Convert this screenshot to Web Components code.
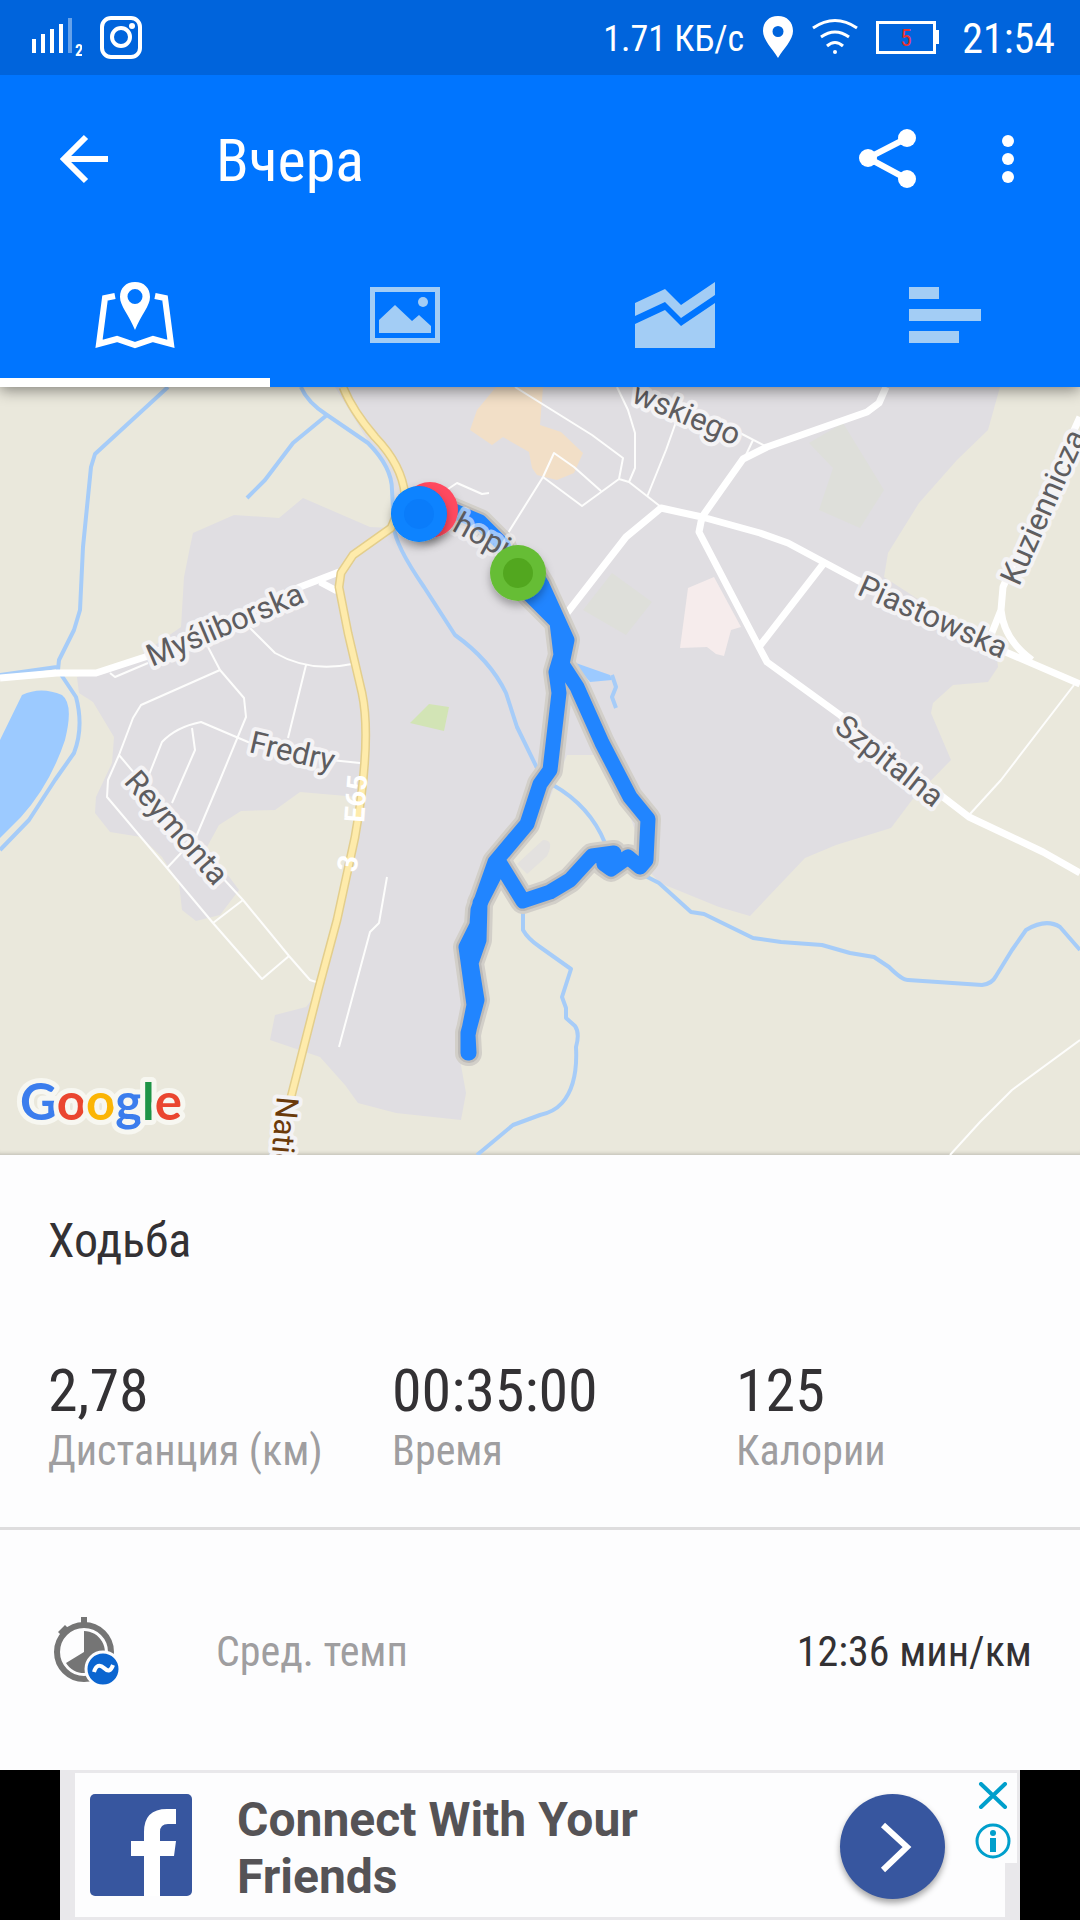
<!DOCTYPE html>
<html lang="ru">
<head>
<meta charset="utf-8">
<meta name="viewport" content="width=device-width, initial-scale=1">
<title>Вчера</title>
<style>
body{
    margin:0;
    min-height:100vh;
    display:flex;
    flex-direction:column;
    background-color:#FDFDFE;
    color:#333134;
    font-family:"Roboto Condensed", Roboto, sans-serif;
}
</style>
</head>
<body>
<app-header title="Вчера">
    <status-bar slot="status" speed="1.71 КБ/с" battery="5" time="21:54"></status-bar>
</app-header>
<route-map></route-map>
<activity-summary title="Ходьба">
    <metric-value number="2,78" label="Дистанция (км)"></metric-value>
    <metric-value number="00:35:00" label="Время"></metric-value>
    <metric-value number="125" label="Калории"></metric-value>
</activity-summary>
<detail-row label="Сред. темп" value="12:36 мин/км"></detail-row>
<ad-banner>Connect With Your Friends</ad-banner>

<script>
function makeTemplate(html){
    const template = document.createElement("template");
    template.innerHTML = html;
    return template;
}

class BaseElement extends HTMLElement{
    constructor(template){
        super();
        this.attachShadow({mode: "open"});
        this.shadowRoot.appendChild(template.content.cloneNode(true));
    }

    fill(...names){
        names.forEach(name => {
            this.shadowRoot.getElementById(name).textContent = this.getAttribute(name);
        });
    }
}

/* status bar */
const statusTemplate = makeTemplate(`
<style>
:host{
    display:flex;
    align-items:center;
    gap:18px;
    padding:10px 25px 11px 32px;
    background-color:#0064DC;
    color:#fff;
    line-height:50px;
}
svg{
    display:block;
    flex:none;
}
span{
    padding-top:4px;
}
#speed{
    margin-left:auto;
    font-size:36px;
}
#time{
    font-size:42px;
    margin-left:4px;
}
#battery{
    font-size:23px;
    fill:#E8322F;
}
</style>
<svg width="50" height="44" viewBox="32 15 50 44" fill="#fff">
    <path d="M32 39h4v14h-4zM41 34h4v19h-4zM50 29h4v24h-4zM59 24h4v29h-4z"/>
    <path d="M68 18h4v35h-4z" opacity=".4"/>
    <text x="75" y="56" font-size="16" font-weight="700">2</text>
</svg>
<svg width="42" height="44" viewBox="0 0 42 44" fill="none" stroke="#fff" stroke-width="4">
    <rect x="2" y="3" width="38" height="39" rx="9"/>
    <circle cx="21" cy="22" r="9"/>
    <circle cx="32" cy="11" r="3" fill="#fff" stroke="none"/>
</svg>
<span id="speed"></span>
<svg width="32" height="44" viewBox="0 0 32 44">
    <path fill="#fff" fill-rule="evenodd" d="M16 1C7 1 1 7 1 16c0 9 9 17 15 27 6-10 15-18 15-27C31 7 25 1 16 1zm0 10a5.500 5.500 0 1 1 0 11 5.500 5.500 0 0 1 0-11z"/>
</svg>
<svg width="46" height="44" viewBox="0 0 46 44" fill="none" stroke="#fff" stroke-width="3">
    <path d="M1 13Q23-2 45 13M9 22Q23 12 37 22M15 31Q23 24 31 31"/>
    <circle cx="23" cy="37" r="2" fill="#fff" stroke="none"/>
</svg>
<svg width="64" height="44" viewBox="0 0 64 44">
    <rect x="1.500" y="7.500" width="57" height="30" fill="none" stroke="#fff" stroke-width="3"/>
    <path d="M60 15h3v14h-3z" fill="#fff"/>
    <text id="battery" x="30" y="31" text-anchor="middle"></text>
</svg>
<span id="time"></span>
`);

class StatusBar extends BaseElement{
    constructor(){
        super(statusTemplate);
    }

    connectedCallback(){
        this.fill("speed", "battery", "time");
    }
}

/* toolbar and tabs */
const headerTemplate = makeTemplate(`
<style>
:host{
    display:block;
    position:relative;
    z-index:1;
    background-color:#0075FF;
    color:#fff;
    box-shadow:0 3px 14px rgba(0,0,0,.45);
}
#toolbar{
    display:flex;
    align-items:center;
    padding:46px 36px;
}
h1{
    margin:0 auto 0 84px;
    padding-top:4px;
    font-size:60px;
    line-height:72px;
    font-weight:400;
}
button{
    border:0;
    padding:0;
    background:none;
    color:inherit;
    cursor:pointer;
}
svg{
    display:block;
    margin:0 auto;
}
#back{
    width:96px;
}
#share{
    width:72px;
    margin-right:48px;
}
#more{
    width:72px;
}
nav{
    display:grid;
    grid-template-columns:repeat(4, 1fr);
}
nav button{
    padding:36px 0 27px;
    border-bottom:9px solid transparent;
    color:#A3CDF5;
}
nav button[aria-selected=true]{
    border-color:#fff;
    color:#fff;
}
</style>
<slot name="status"></slot>
<div id="toolbar">
    <button id="back" aria-label="Назад">
        <svg width="48" height="50" viewBox="0 0 48 50" fill="none" stroke="currentColor" stroke-width="6"><path d="M48 25H5M26 3L4 25l22 22"/></svg>
    </button>
    <h1 id="title"></h1>
    <button id="share" aria-label="Поделиться">
        <svg width="60" height="60" viewBox="0 0 60 60" fill="currentColor">
            <path d="M49 9L10 29l39 21" fill="none" stroke="currentColor" stroke-width="6"/>
            <circle cx="49" cy="9" r="9"/><circle cx="10" cy="29" r="9"/><circle cx="49" cy="50" r="9"/>
        </svg>
    </button>
    <button id="more" aria-label="Ещё">
        <svg width="12" height="48" viewBox="0 0 12 48" fill="currentColor"><circle cx="6" cy="6" r="6"/><circle cx="6" cy="24" r="6"/><circle cx="6" cy="42" r="6"/></svg>
    </button>
</div>
<nav role="tablist">
    <button role="tab" aria-selected="true" aria-label="Карта">
        <svg width="80" height="72" viewBox="0 0 80 72">
            <path d="M20 17L10 19 4 65l18-5 18 6 18-6 18 5-6-46-10-2" fill="none" stroke="currentColor" stroke-width="6"/>
            <path fill="currentColor" fill-rule="evenodd" d="M40 3c-9 0-15 6-15 15 0 9 9 18 15 33 6-15 15-24 15-33 0-9-6-15-15-15zm0 7a7 7 0 1 1 0 15 7 7 0 0 1 0-15z"/>
        </svg>
    </button>
    <button role="tab" aria-selected="false" aria-label="Фото">
        <svg width="72" height="72" viewBox="0 0 72 72" fill="currentColor">
            <path fill-rule="evenodd" d="M1 8h70v56H1zM6 13v46h60V13z"/>
            <path d="M10 54V41l16-15 17 16 7-6 12 11v7z"/><circle cx="54" cy="23" r="5"/>
        </svg>
    </button>
    <button role="tab" aria-selected="false" aria-label="Графики">
        <svg width="80" height="72" viewBox="0 0 80 72" fill="currentColor">
            <path d="M0 24l30-14 16 16L80 3v13L46 39 30 23 0 37z"/>
            <path d="M0 45l30-14 16 16 34-23v45H0z"/>
        </svg>
    </button>
    <button role="tab" aria-selected="false" aria-label="Круги">
        <svg width="72" height="72" viewBox="0 0 72 72" fill="currentColor"><path d="M0 8h30v12H0zM0 30h72v12H0zM0 52h50v12H0z"/></svg>
    </button>
</nav>
`);

class AppHeader extends BaseElement{
    constructor(){
        super(headerTemplate);
    }

    connectedCallback(){
        this.fill("title");
    }
}

/* map with the recorded track */
const mapTemplate = makeTemplate(`
<style>
:host{
    display:block;
    background-color:#EAE8DC;
    box-shadow:inset 0 -5px 4px -4px rgba(0,0,0,.2);
    font-family:Roboto, sans-serif;
}
svg{
    display:block;
    width:100%;
    height:auto;
}
.line{
    fill:none;
    stroke-linejoin:round;
}
.water{
    stroke:#A6CCF8;
    stroke-width:4;
}
.local{
    stroke:#FDFDFC;
    stroke-width:2;
}
.main{
    stroke:#fff;
    stroke-width:7;
}
.track{
    stroke-linecap:round;
}
.label{
    font-size:31px;
    fill:#5E5D60;
    stroke:#F4F3F5;
    stroke-width:8;
    stroke-linejoin:round;
    paint-order:stroke;
}
.number{
    font-size:28px;
    font-weight:700;
    fill:#fff;
}
.google{
    font-family:Lato, sans-serif;
    font-size:51px;
    font-weight:700;
    stroke:#F7F7F1;
    stroke-width:10;
    stroke-linejoin:round;
    paint-order:stroke;
}
</style>
<svg viewBox="0 387 1080 768" role="img" aria-label="Маршрут на карте">
    <defs>
        <filter id="drop" x="-30%" y="-30%" width="160%" height="170%">
            <feDropShadow dx="0" dy="5" stdDeviation="4" flood-opacity=".3"/>
        </filter>
        <path id="track" d="M447 508L480 522 503 545 520 585 557 622 561 655 556 672 559 693 550 770 540 784 527 824 495 862 478 910 477 925 466 947 474 1005 468 1035 469 1053M468 1053V1033L477 1000 471 963 479 940 480 903 499 866M530 565L542 585 567 640 562 664 577 687 602 743 630 797 648 819 646 860 640 867 628 857 611 869 604 864 614 853 592 856 570 880 550 892 523 901 499 862"/>
    </defs>
    <!-- built-up areas -->
    <path fill="#E0DEE2" d="M335 387L392 480 391 528 370 527 303 498 279 518 234 515 193 533 190 547 184 577 181 627 138 657 77 677 79 693 93 702 114 737 112 763 96 797 95 813 110 832 141 837 162 857 179 883 182 910 196 921 220 915 239 890 207 847 219 825 241 811 275 810 300 792 358 797 344 903 317 993 306 1007 275 1015 270 1040 320 1057 345 1085 358 1103 396 1113 461 1120 466 1093 460 1060 470 960 485 890 505 865 545 810 567 755 610 755 648 870 660 883 719 907 750 916 805 858 836 845 891 828 912 800 951 760 931 713 933 703 953 685 988 682 998 667 996 650 884 577 888 553 919 503 957 460 988 430 1000 387z"/>
    <path d="M543 840q12 0 4 16l-20 18-10-10z" fill="#E3E1DF"/>
    <path d="M496 387L477 410 470 430 492 445 503 437 529 452 532 468 537 475 557 480 574 473 583 453 561 432 540 425 543 387z" fill="#F2DFC7"/>
    <path d="M688 588L714 577 741 627 731 630 724 656 716 654 707 647 680 648z" fill="#F6ECEC"/>
    <path d="M429 704L449 707 444 731 410 723z" fill="#D2E4B5"/>
    <path d="M612 573L652 602 626 635 583 610zM843 423L884 490 860 528 819 510 833 468 809 443z" fill="#DEDFDA"/>
    <!-- water -->
    <path d="M0 740L22 695Q41 686 62 695 74 704 65 740 50 785 21 817L0 838zM573 662L610 675 612 680 590 682z" fill="#9CCAFF"/>
    <path class="line water" d="M168 387L95 454 91 467 83 547 80 610 74 630 59 660 58 670 76 697Q84 727 74 753L55 780 29 820 0 850M0 675L57 667M301 387Q307 402 327 415L368 443Q392 467 392 490L394 527Q395 545 424 587L455 635Q490 660 506 693L517 727 537 768M327 415L293 443 265 480 247 498"/>
    <path class="line water" d="M553 785Q590 806 605 843M630 868L659 883 691 912 704 914 753 938 781 942 822 945 850 953 874 957 889 967Q902 980 908 980L982 985Q992 984 996 976L1012 950 1026 930Q1046 918 1060 927L1080 950M523 912V930Q528 939 540 947L571 969 562 997 566 1008V1018L575 1026Q580 1033 576 1047 578 1085 562 1103 554 1112 540 1115L513 1125 477 1155M612 675L616 687 612 697 616 708"/>
    <!-- local streets -->
    <path class="line local" d="M110 673L115 677 148 663M208 647L220 670 244 698 246 717 220 780 196 837 167 868M220 670L141 705 133 718 119 755 108 780 107 797 167 868 213 923 262 979 289 956M119 755L220 875 243 900 289 956 310 980 316 982M213 923L243 900M250 628L275 653Q310 673 352 664M306 665L288 738M145 785L162 742Q176 727 201 722L248 742 331 760 360 763M192 728L195 750 172 803M387 877L379 923 370 932 339 1047"/>
    <path class="line local" d="M448 489L457 483 482 494 489 493M508 533L543 477 554 453 574 467 601 491M543 477L582 506 619 479 623 458 592 435 515 387M617 387L628 410 635 433V468L629 482M619 479L629 482 661 507M676 422L666 450 647 497M740 433L767 447M753 440L745 457M1074 685L1001 780 970 814M1080 1040L1012 1090 980 1122 950 1155"/>
    <path class="line main" d="M0 678L57 673H96L145 657 300 587 339 572M320 582L337 591M567 613L626 537 661 508 702 517 760 533 788 543 857 580 1001 650 1080 684M886 387L879 403 867 412 767 447 743 459 726 483 702 517 699 532 759 647 767 662 840 715 943 797 969 817 1043 852 1080 873M824 563L759 647M1080 417L1003 587 1001 610Q1004 640 1032 660M1001 610L991 635"/>
    <!-- national road -->
    <path class="line" stroke="#E3CE8C" stroke-width="9" d="M343 387Q352 410 375 437 402 465 405 495L391 528 353 555 341 573 339 587 348 633 362 693Q372 740 355 837L337 920 319 987 275 1160"/>
    <path class="line" stroke="#FEEBAB" stroke-width="6" d="M343 387Q352 410 375 437 402 465 405 495L391 528 353 555 341 573 339 587 348 633 362 693Q372 740 355 837L337 920 319 987 275 1160"/>
    <!-- track -->
    <use href="#track" class="line track" stroke="#D2CFC9" stroke-width="26"/>
    <use href="#track" class="line track" stroke="#BDBAB7" stroke-width="20"/>
    <use href="#track" class="line track" stroke="#2185FF" stroke-width="15"/>
    <!-- labels -->
    <text class="label" transform="translate(152 667) rotate(-23)">Myśliborska</text>
    <text class="label" transform="translate(248 752) rotate(13)">Fredry</text>
    <text class="label" transform="translate(123 782) rotate(49)">Reymonta</text>
    <text class="label" transform="translate(735 446) rotate(23)" text-anchor="end">wskiego</text>
    <text class="label" transform="translate(856 594) rotate(24)">Piastowska</text>
    <text class="label" transform="translate(1019 587) rotate(-66)">Kuziennicza</text>
    <text class="label" transform="translate(833 730) rotate(38)">Szpitalna</text>
    <text class="label" transform="translate(451 530) rotate(29)" stroke-opacity=".6">hopi</text>
    <text class="number" transform="translate(364 823) rotate(-86)">E65</text>
    <text class="number" transform="translate(356 873) rotate(-80)">3</text>
    <text class="label" transform="translate(277 1096) rotate(95)" style="fill:#6B3A0A">Natio</text>
    <!-- markers -->
    <g filter="url(#drop)"><circle cx="430" cy="510" r="28" fill="#FF4A5E"/></g>
    <g filter="url(#drop)"><circle cx="419" cy="514" r="28" fill="#0783FF"/></g>
    <circle cx="419" cy="514" r="15" fill="#0A7CFA"/>
    <g filter="url(#drop)"><circle cx="518" cy="573" r="28" fill="#66BD35"/></g>
    <circle cx="518" cy="573" r="15" fill="#52A71F"/>
    <text class="google" x="20" y="1120"><tspan fill="#3B7DED">G</tspan><tspan fill="#EA4630">o</tspan><tspan fill="#FBB505">o</tspan><tspan fill="#3B7DED">g</tspan><tspan fill="#1E9447">l</tspan><tspan fill="#EA4630">e</tspan></text>
</svg>
`);

class RouteMap extends BaseElement{
    constructor(){
        super(mapTemplate);
    }
}

/* one number with its caption */
const metricTemplate = makeTemplate(`
<style>
:host{
    display:block;
}
p{
    margin:0;
}
#number{
    font-size:60px;
    line-height:70px;
}
#label{
    color:#9F9EA0;
    font-size:42px;
    line-height:50px;
    white-space:nowrap;
}
</style>
<p id="number"></p>
<p id="label"></p>
`);

class MetricValue extends BaseElement{
    constructor(){
        super(metricTemplate);
    }

    connectedCallback(){
        this.fill("number", "label");
    }
}

const summaryTemplate = makeTemplate(`
<style>
:host{
    display:block;
    padding:56px 0 51px 48px;
    border-bottom:3px solid #DEDDDE;
}
h2{
    margin:0 0 85px;
    font-size:48px;
    line-height:60px;
    font-weight:400;
}
#metrics{
    display:grid;
    grid-template-columns:repeat(3, 1fr);
}
</style>
<h2 id="title"></h2>
<div id="metrics"><slot></slot></div>
`);

class ActivitySummary extends BaseElement{
    constructor(){
        super(summaryTemplate);
    }

    connectedCallback(){
        this.fill("title");
    }
}

const rowTemplate = makeTemplate(`
<style>
:host{
    display:flex;
    flex:1;
    align-items:center;
    padding:84px 48px;
    font-size:42px;
    line-height:50px;
}
svg{
    display:block;
    flex:none;
    margin-right:96px;
}
span{
    padding-top:4px;
}
#label{
    color:#9F9EA0;
}
#value{
    margin-left:auto;
}
</style>
<svg width="72" height="72" viewBox="0 0 72 72">
    <circle cx="36" cy="38" r="27" fill="none" stroke="#757575" stroke-width="6"/>
    <path d="M33 3h6v7h-6zM10 18l7-7 4 4-7 7z" fill="#757575"/>
    <path d="M36 38V17a21 21 0 1 1-18 32z" fill="#757575"/>
    <circle cx="55" cy="55" r="17" fill="#0B65D0" stroke="#FDFDFE" stroke-width="3"/>
    <path d="M46 58c2-7 6-8 10-4s7 3 9-3" fill="none" stroke="#fff" stroke-width="4"/>
</svg>
<span id="label"></span>
<span id="value"></span>
`);

class DetailRow extends BaseElement{
    constructor(){
        super(rowTemplate);
    }

    connectedCallback(){
        this.fill("label", "value");
    }
}

/* banner under the content */
const adTemplate = makeTemplate(`
<style>
:host{
    display:block;
    padding:0 60px;
    background-color:#000;
    font-family:Roboto, sans-serif;
}
#ad{
    display:flex;
    align-items:flex-start;
    border:solid #E9E8EB;
    border-width:3px 15px;
    background-color:#FDFDFE;
    padding:21px 0 12px;
}
svg{
    display:block;
}
#logo{
    flex:none;
    margin-left:15px;
}
a{
    flex:1;
    margin:-3px 0 0 45px;
    max-width:480px;
    color:#555356;
    font-size:48px;
    line-height:57px;
    font-weight:700;
    text-decoration:none;
}
button{
    border:0;
    padding:0;
    background:none;
    cursor:pointer;
}
#open{
    flex:none;
    margin-left:auto;
    border-radius:50%;
    background-color:#37569F;
    box-shadow:0 4px 6px rgba(0,0,0,.35);
}
#choices{
    flex:none;
    display:grid;
    gap:14px;
    margin:-21px -12px 0 24px;
    padding:9px 6px 4px;
    background-color:#FDFDFE;
}
</style>
<div id="ad">
    <svg id="logo" width="102" height="102" viewBox="0 0 102 102">
        <rect width="102" height="102" rx="5" fill="#37569F"/>
        <path d="M54 102V62H41V47h13V38q0-23 23-23h9v15h-8q-8 0-8 8v9h16l-2 15H70v40z" fill="#fff"/>
    </svg>
    <a href="#"><slot></slot></a>
    <button id="open" aria-label="Open">
        <svg width="105" height="105" viewBox="0 0 105 105" fill="none" stroke="#fff" stroke-width="6"><path d="M43 31l24 22-24 23"/></svg>
    </button>
    <div id="choices">
        <button aria-label="Close">
            <svg width="36" height="27" viewBox="0 0 36 27" stroke="#009FCC" stroke-width="4" stroke-linecap="round"><path d="M6 2l24 23M30 2L6 25"/></svg>
        </button>
        <button aria-label="Info">
            <svg width="36" height="36" viewBox="0 0 36 36" fill="#009FCC">
                <circle cx="18" cy="18" r="16" fill="none" stroke="#009FCC" stroke-width="3"/>
                <circle cx="18" cy="10" r="3"/><path d="M15 15h6v14h-6z"/>
            </svg>
        </button>
    </div>
</div>
`);

class AdBanner extends BaseElement{
    constructor(){
        super(adTemplate);
    }
}

customElements.define("status-bar", StatusBar);
customElements.define("app-header", AppHeader);
customElements.define("route-map", RouteMap);
customElements.define("metric-value", MetricValue);
customElements.define("activity-summary", ActivitySummary);
customElements.define("detail-row", DetailRow);
customElements.define("ad-banner", AdBanner);
</script>
</body>
</html>
